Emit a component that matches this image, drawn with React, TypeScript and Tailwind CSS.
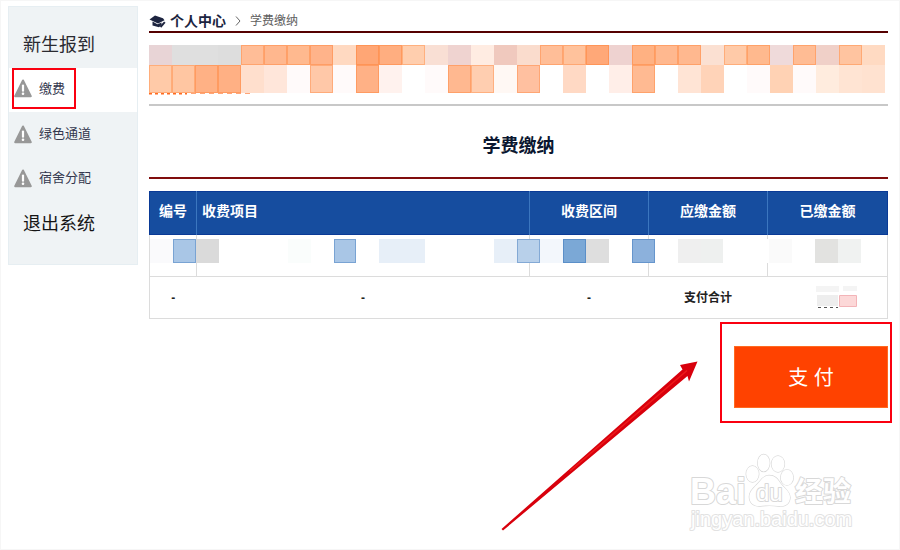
const bannerTop = [
    'bg-[#e8d4d6]', 'bg-[#dfdfdf]', 'bg-[#dfdfdf]', 'bg-[#dddddd]', 'bg-[#ffbd97]', 'bg-[#ffb78e]', 'bg-[#ffb98f]', 'bg-[#ffb38a]',
    'bg-[#ffd9c1]', 'bg-[#ffa675]', 'bg-[#ffae80]', 'bg-[#ffceae]', 'bg-[#f9dfd4]', 'bg-[#efd3d0]', 'bg-[#ffece2]', 'bg-[#f0c9be]',
    'bg-[#fadccd]', 'bg-[#ffbe98]', 'bg-[#ffc29c]', 'bg-[#ffa878]', 'bg-[#eed2d0]', 'bg-[#ffb182]', 'bg-[#ffb88f]', 'bg-[#ffb88f]',
    'bg-[#fbe0d2]', 'bg-[#ffcaa8]', 'bg-[#ffb98e]', 'bg-[#efdada]', 'bg-[#ffbc94]', 'bg-[#f0d0c8]', 'bg-[#ffc4a0]', 'bg-[#ffdac2]',
];

const bannerBottom = [
    'bg-[#ffcaa8]', 'bg-[#ffc6a2]', 'bg-[#ffb185]', 'bg-[#ffb084]', 'bg-[#ffdfcd]', 'bg-[#ffe6da]', 'bg-[#fffafa]', 'bg-[#ffc8a8]',
    'bg-[#fffafa]', 'bg-[#ffb186]', 'bg-[#fff2ee]', '', 'bg-[#fffafa]', 'bg-[#ffb890]', 'bg-[#ffceb0]', 'bg-[#fff8f4]',
    'bg-[#ffc0a0]', '', 'bg-[#ffd9c4]', '', 'bg-[#ffeee8]', 'bg-[#ffba92]', '', 'bg-[#ffe4d5]',
    'bg-[#ffd3b8]', '', 'bg-[#fffafa]', 'bg-[#ffd2b4]', 'bg-[#fffafa]', 'bg-[#ffecde]', 'bg-[#ffe4d3]', 'bg-[#ffe2d0]',
];

const recordCells = [
    'bg-[#fafafc]', 'bg-[#a9c6e6]', 'bg-[#dadada]', '', '', '', 'bg-[#fafdfc]', '',
    'bg-[#a9c6e6]', '', 'bg-[#e7eff8]', 'bg-[#e7eff8]', '', '', '', 'bg-[#e7eff8]',
    'bg-[#b8d0ea]', 'bg-[#f3f7fc]', 'bg-[#7ba8d6]', 'bg-[#dedede]', '', 'bg-[#8cb1dc]', '', 'bg-[#efefef]',
    'bg-[#eef0ef]', '', '', 'bg-[#fafafa]', '', 'bg-[#e2e2e0]', 'bg-[#f0f2f1]', '',
];

// colours with a visible edge
const warmEdge = /^bg-\[#ff[abc]/;
const blueEdge = /^bg-\[#(a9|b8|7b|8c)/;

type MosaicProps = {
    cells: string[];
    size: string;
};

const edgeOf = (color: string) => {
    if (warmEdge.test(color)) return 'border border-[#ff6a10]/30';
    if (blueEdge.test(color)) return 'border border-[#2060b0]/35';
    return '';
};

const Mosaic = ({ cells, size }: MosaicProps) => (
    <div className={`grid grid-cols-[repeat(32,minmax(0,1fr))] pr-[3px] ${size}`} aria-hidden="true">
        {cells.map((color, i) => (
            <span key={i} className={`${color} ${edgeOf(color)}`} />
        ))}
    </div>
);

const WarningIcon = () => (
    <svg viewBox="0 0 18 19" className="h-[19px] w-[18px] shrink-0" aria-hidden="true">
        <path d="M9 1.5 16.8 17.2H1.2Z" fill="#989898" stroke="#989898" strokeWidth="2" strokeLinejoin="round" />
        <path d="M9 6.5v5.2" stroke="#fff" strokeWidth="2.2" strokeLinecap="round" />
        <circle cx="9" cy="14.7" r="1.3" fill="#fff" />
    </svg>
);

const Sidebar = () => (
    <nav className="w-[130px] shrink-0 self-start border border-[#e6eef2] bg-[#eff3f5] pb-4 text-[13px] text-[#34384f]">
        <h2 className="flex h-[61px] items-center pt-4 pl-[14px] text-[18px] text-[#2a2a30]">新生报到</h2>
        <ul>
            <li className="h-11 bg-white">
                <a href="#pay" className="ml-[3px] flex h-[41px] w-16 items-center gap-[7px] border-2 border-[#fa0010]">
                    <WarningIcon />
                    缴费
                </a>
            </li>
            <li>
                <a href="#green" className="flex h-11 items-center gap-[7px] pl-[5px]">
                    <WarningIcon />
                    绿色通道
                </a>
            </li>
            <li>
                <a href="#dorm" className="flex h-11 items-center gap-[7px] pl-[5px]">
                    <WarningIcon />
                    宿舍分配
                </a>
            </li>
        </ul>
        <a href="#logout" className="flex h-12 items-center pl-[14px] text-[18px] text-[#151515]">
            退出系统
        </a>
    </nav>
);

const Breadcrumb = () => (
    <nav className="flex h-[27px] items-center border-b-2 border-[#550000] pt-1 leading-none">
        <svg viewBox="0 0 17 14" className="mr-1 h-[14px] w-[17px]" aria-hidden="true">
            <path d="M0.5 5.5 6 1.5l8 2.7 1.500 2-6.500 3.300Z" fill="#1d2540" />
            <path d="M3.500 7.500 8.500 10.300l4-1.800v2.500l-2.500 2.200-6.500-1.800Z" fill="#1d2540" />
            <path d="M15.800 8.200 11.500 13" stroke="#1d2540" strokeWidth="2" />
        </svg>
        <a href="#home" className="text-[14px] font-bold text-[#1b2440]">个人中心</a>
        <svg viewBox="0 0 6 10" className="mx-[9px] h-[10px] w-[6px]" fill="none" stroke="#666" aria-hidden="true">
            <path d="m1 0.5 4 4.5-4 4.5" />
        </svg>
        <span className="text-[12px] text-[#606060]">学费缴纳</span>
    </nav>
);

const FeeTable = () => (
    <div className="relative mt-3">
        <table className="w-full table-fixed border-collapse border border-[#dcdcdc] text-[14px] text-[#222]">
            <colgroup>
                <col className="w-[47px]" />
                <col />
                <col className="w-[119px]" />
                <col className="w-[119px]" />
                <col className="w-[120px]" />
            </colgroup>
            <thead className="border border-[#0a3a96] bg-[#164d9f] text-white">
                <tr className="h-[43px]">
                    <th className="pb-[3px]">编号</th>
                    <th className="border-l border-[#3b76bf] pb-[3px] pl-[5px] text-left">收费项目</th>
                    <th className="border-l border-[#3b76bf] pb-[3px]">收费区间</th>
                    <th className="border-l border-[#3b76bf] pb-[3px]">应缴金额</th>
                    <th className="border-l border-[#3b76bf] pb-[3px]">已缴金额</th>
                </tr>
            </thead>
            <tbody>
                <tr className="h-[42px] border-b border-[#dcdcdc]">
                    <td />
                    <td className="border-l border-[#dcdcdc]" />
                    <td className="border-l border-[#dcdcdc]" />
                    <td className="border-l border-[#dcdcdc]" />
                    <td className="border-l border-[#dcdcdc]" />
                </tr>
                <tr className="h-[42px] text-center text-[12px] font-bold">
                    <td>-</td>
                    <td>-</td>
                    <td>-</td>
                    <td>支付合计</td>
                    <td>
                        <svg viewBox="0 0 42 24" className="ml-12 h-6 w-[42px]" aria-hidden="true">
                            <path d="M0 0h23v6H0zM27 0h14v5H27z" fill="#f4f4f4" />
                            <path d="M1 9h21v11H1z" fill="#eeeeee" />
                            <path d="M23.500 9.500h17v11h-17z" fill="#fcd8d8" stroke="#f3b4b8" />
                            <path d="M2 21.500h20" stroke="#555" strokeDasharray="3 3" />
                        </svg>
                    </td>
                </tr>
            </tbody>
        </table>
        <div className="absolute inset-x-0 top-12 border-x border-[#dcdcdc] bg-white">
            <Mosaic cells={recordCells} size="h-6" />
        </div>
    </div>
);

const PayBox = () => (
    <div className="mt-[3px] -mr-1 flex justify-end">
        <div className="relative border-2 border-[#fa0010] pt-[22px] pr-[2px] pb-[13px] pl-3">
            <button className="h-[62px] w-[154px] border border-[#ff6a20] bg-[#ff4200] pt-[2px] text-[20px] text-white">支 付</button>
            <svg viewBox="0 0 198 171" className="absolute top-[37px] right-full mr-6 h-[171px] w-[198px]" aria-hidden="true">
                <path d="M1.500 168 182.500 8.500 180 4 197.500 0.500 189 20.500 187.500 15 3 169.500Z" fill="#d8000c" />
                <path d="M70 110 187 9.500" stroke="#ee1a1a" strokeWidth="1.500" />
            </svg>
        </div>
    </div>
);

const Watermark = () => (
    <svg
        viewBox="0 0 170 84"
        className="absolute right-[41px] bottom-[14px] h-[84px] w-[170px] font-['Liberation_Sans','Noto_Sans_CJK_SC',sans-serif]"
        fill="#fff"
        stroke="#d8d8d8"
        strokeWidth="2"
        paintOrder="stroke"
        strokeLinejoin="round"
        aria-hidden="true"
    >
        <text x="2" y="53" fontSize="36" fontWeight="bold">Bai</text>
        <g strokeWidth="1.300">
            <path d="M81 24.500c-6 0-8 5-12 9-4 4-8.500 8-7.500 14 1 6 6 8 11 7.500 6-.8 12-.8 18 0 6 .8 11-1.500 11.500-8 .5-6-5-9-9-14-3-4-5-8.500-12-8.500Z" />
            <ellipse cx="64.500" cy="23" rx="6.300" ry="8" />
            <ellipse cx="75.700" cy="12" rx="6" ry="8.500" />
            <ellipse cx="90" cy="13" rx="6.500" ry="8" />
            <ellipse cx="99" cy="26.500" rx="6.300" ry="7.700" />
        </g>
        <text x="68" y="50" fontSize="24">du</text>
        <text x="107" y="51" fontSize="28" fontWeight="bold">经验</text>
        <text x="3" y="75" fontSize="20" stroke="#e2e2e2">jingyan.baidu.com</text>
    </svg>
);

const App = () => {
    return (
        <div className="relative flex min-h-screen items-start gap-[11px] border border-[#f6f6f6] bg-white pt-[5px] pr-[11px] pl-[7px] font-['Liberation_Sans','Noto_Sans_CJK_SC',sans-serif]">
            <Sidebar />
            <main className="min-w-0 flex-1">
                <Breadcrumb />
                <section className="border-b-2 border-[#c8c8c8] pt-3">
                    <Mosaic cells={bannerTop} size="h-5" />
                    <Mosaic cells={bannerBottom} size="h-7" />
                    <svg className="h-[11px] w-[104px]" viewBox="0 0 104 11" stroke="#ff6a20" aria-hidden="true">
                        <path d="M0 .5h38" strokeWidth="2" strokeDasharray="3 3" />
                        <path d="M42 .5h60" strokeDasharray="5 4" opacity=".6" />
                    </svg>
                </section>
                <h1 className="flex h-[73px] items-center justify-center border-b-2 border-[#800d0d] pt-[10px] text-[18px] font-bold text-[#0b1730]">
                    学费缴纳
                </h1>
                <FeeTable />
                <PayBox />
            </main>
            <Watermark />
        </div>
    );
};

export default App;
